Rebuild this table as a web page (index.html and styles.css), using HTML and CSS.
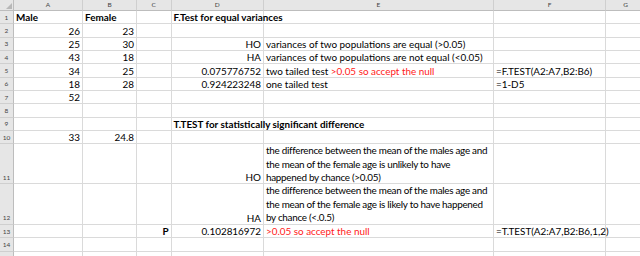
FILE: index.html
```html
<!doctype html>
<html lang="en">
    <head>
        <meta charset="UTF-8" />
        <title>F.Test / T.TEST</title>
        <link rel="stylesheet" href="styles.css">
    </head>
    <body>
        <div class="sheet">
            <!-- column headers -->
            <div class="corner"><span class="corner-mark"></span></div>
            <div class="col-head">A</div>
            <div class="col-head">B</div>
            <div class="col-head">C</div>
            <div class="col-head">D</div>
            <div class="col-head">E</div>
            <div class="col-head">F</div>
            <div class="col-head">G</div>

            <!-- row 1 -->
            <div class="row-head">1</div>
            <div class="cell bold">Male</div>
            <div class="cell bold">Female</div>
            <div class="cell"></div>
            <div class="cell bold">F.Test for equal variances</div>
            <div class="cell"></div>
            <div class="cell"></div>
            <div class="cell"></div>

            <!-- row 2 -->
            <div class="row-head">2</div>
            <div class="cell num">26</div>
            <div class="cell num">23</div>
            <div class="cell"></div>
            <div class="cell"></div>
            <div class="cell"></div>
            <div class="cell"></div>
            <div class="cell"></div>

            <!-- row 3 -->
            <div class="row-head">3</div>
            <div class="cell num">25</div>
            <div class="cell num">30</div>
            <div class="cell"></div>
            <div class="cell num">HO</div>
            <div class="cell">variances of two populations are equal (&gt;0.05)</div>
            <div class="cell"></div>
            <div class="cell"></div>

            <!-- row 4 -->
            <div class="row-head">4</div>
            <div class="cell num">43</div>
            <div class="cell num">18</div>
            <div class="cell"></div>
            <div class="cell num">HA</div>
            <div class="cell">variances of two populations are not equal (&lt;0.05)</div>
            <div class="cell"></div>
            <div class="cell"></div>

            <!-- row 5 -->
            <div class="row-head">5</div>
            <div class="cell num">34</div>
            <div class="cell num">25</div>
            <div class="cell"></div>
            <div class="cell num">0.075776752</div>
            <div class="cell"><span>two tailed test <span class="red">&gt;0.05 so accept the null</span></span></div>
            <div class="cell">=F.TEST(A2:A7,B2:B6)</div>
            <div class="cell"></div>

            <!-- row 6 -->
            <div class="row-head">6</div>
            <div class="cell num">18</div>
            <div class="cell num">28</div>
            <div class="cell"></div>
            <div class="cell num">0.924223248</div>
            <div class="cell">one tailed test</div>
            <div class="cell">=1-D5</div>
            <div class="cell"></div>

            <!-- row 7 -->
            <div class="row-head">7</div>
            <div class="cell num">52</div>
            <div class="cell"></div>
            <div class="cell"></div>
            <div class="cell"></div>
            <div class="cell"></div>
            <div class="cell"></div>
            <div class="cell"></div>

            <!-- row 8 -->
            <div class="row-head">8</div>
            <div class="cell"></div>
            <div class="cell"></div>
            <div class="cell"></div>
            <div class="cell"></div>
            <div class="cell"></div>
            <div class="cell"></div>
            <div class="cell"></div>

            <!-- row 9 -->
            <div class="row-head">9</div>
            <div class="cell"></div>
            <div class="cell"></div>
            <div class="cell"></div>
            <div class="cell bold">T.TEST for statistically significant difference</div>
            <div class="cell"></div>
            <div class="cell"></div>
            <div class="cell"></div>

            <!-- row 10 -->
            <div class="row-head">10</div>
            <div class="cell num">33</div>
            <div class="cell num">24.8</div>
            <div class="cell"></div>
            <div class="cell"></div>
            <div class="cell"></div>
            <div class="cell"></div>
            <div class="cell"></div>

            <!-- row 11 -->
            <div class="row-head">11</div>
            <div class="cell"></div>
            <div class="cell"></div>
            <div class="cell"></div>
            <div class="cell num">HO</div>
            <div class="cell wrap">the difference between the mean of the males age and<br>the mean of the female age is unlikely to have<br>happened by chance (&gt;0.05)</div>
            <div class="cell"></div>
            <div class="cell"></div>

            <!-- row 12 -->
            <div class="row-head">12</div>
            <div class="cell"></div>
            <div class="cell"></div>
            <div class="cell"></div>
            <div class="cell num">HA</div>
            <div class="cell wrap">the difference between the mean of the males age and<br>the mean of the female age is likely to have happened<br>by chance (&lt;.0.5)</div>
            <div class="cell"></div>
            <div class="cell"></div>

            <!-- row 13 -->
            <div class="row-head">13</div>
            <div class="cell"></div>
            <div class="cell"></div>
            <div class="cell num bold">P</div>
            <div class="cell num">0.102816972</div>
            <div class="cell red">&gt;0.05 so accept the null</div>
            <div class="cell">=T.TEST(A2:A7,B2:B6,1,2)</div>
            <div class="cell"></div>

            <!-- row 14 -->
            <div class="row-head">14</div>
            <div class="cell"></div>
            <div class="cell"></div>
            <div class="cell"></div>
            <div class="cell"></div>
            <div class="cell"></div>
            <div class="cell"></div>
            <div class="cell"></div>

            <!-- row 15 -->
            <div class="row-head"></div>
            <div class="cell"></div>
            <div class="cell"></div>
            <div class="cell"></div>
            <div class="cell"></div>
            <div class="cell"></div>
            <div class="cell"></div>
            <div class="cell"></div>
        </div>
    </body>
</html>
```

FILE: styles.css
```css
html,
body {
    margin: 0;
    padding: 0;
    background: #ffffff;
    overflow: hidden;
}

.sheet {
    display: grid;
    grid-template-columns: 14px 69px 54px 34.5px 92.5px 230px 112px 40px;
    grid-template-rows: 11px repeat(10, 13.33px) 40px 40.67px repeat(3, 13.33px);
    font-family: Lato, "Liberation Sans", sans-serif;
    font-size: 9.9px;
    color: #000000;
}

.corner,
.col-head,
.row-head {
    background: #e6e6e6;
    color: #444444;
    box-sizing: border-box;
}

.corner {
    border-right: 1px solid #bdbdbd;
    border-bottom: 1px solid #bdbdbd;
    position: relative;
}

.corner-mark {
    position: absolute;
    right: 1px;
    bottom: 1px;
    width: 0;
    height: 0;
    border-left: 6px solid transparent;
    border-bottom: 6px solid #b8b8b8;
}

.col-head {
    font-size: 6.5px;
    text-align: center;
    line-height: 10px;
    border-right: 1px solid #cfcfcf;
    border-bottom: 1px solid #bdbdbd;
}

.row-head {
    font-size: 6.5px;
    text-align: center;
    border-right: 1px solid #bdbdbd;
    border-bottom: 1px solid #cfcfcf;
    display: flex;
    align-items: flex-end;
    justify-content: center;
    padding-bottom: 2px;
    line-height: 1;
}

.cell {
    box-sizing: border-box;
    border-right: 1px solid #dadada;
    border-bottom: 1px solid #dadada;
    padding: 0 2px 0 2px;
    white-space: nowrap;
    display: flex;
    align-items: flex-end;
    line-height: 12px;
    min-width: 0;
}

.num {
    justify-content: flex-end;
}

.bold {
    font-weight: bold;
}

.red {
    color: #ff2020;
}

.wrap {
    display: block;
    padding-top: 0;
    line-height: 13.3px;
    letter-spacing: -0.28px;
}
```
